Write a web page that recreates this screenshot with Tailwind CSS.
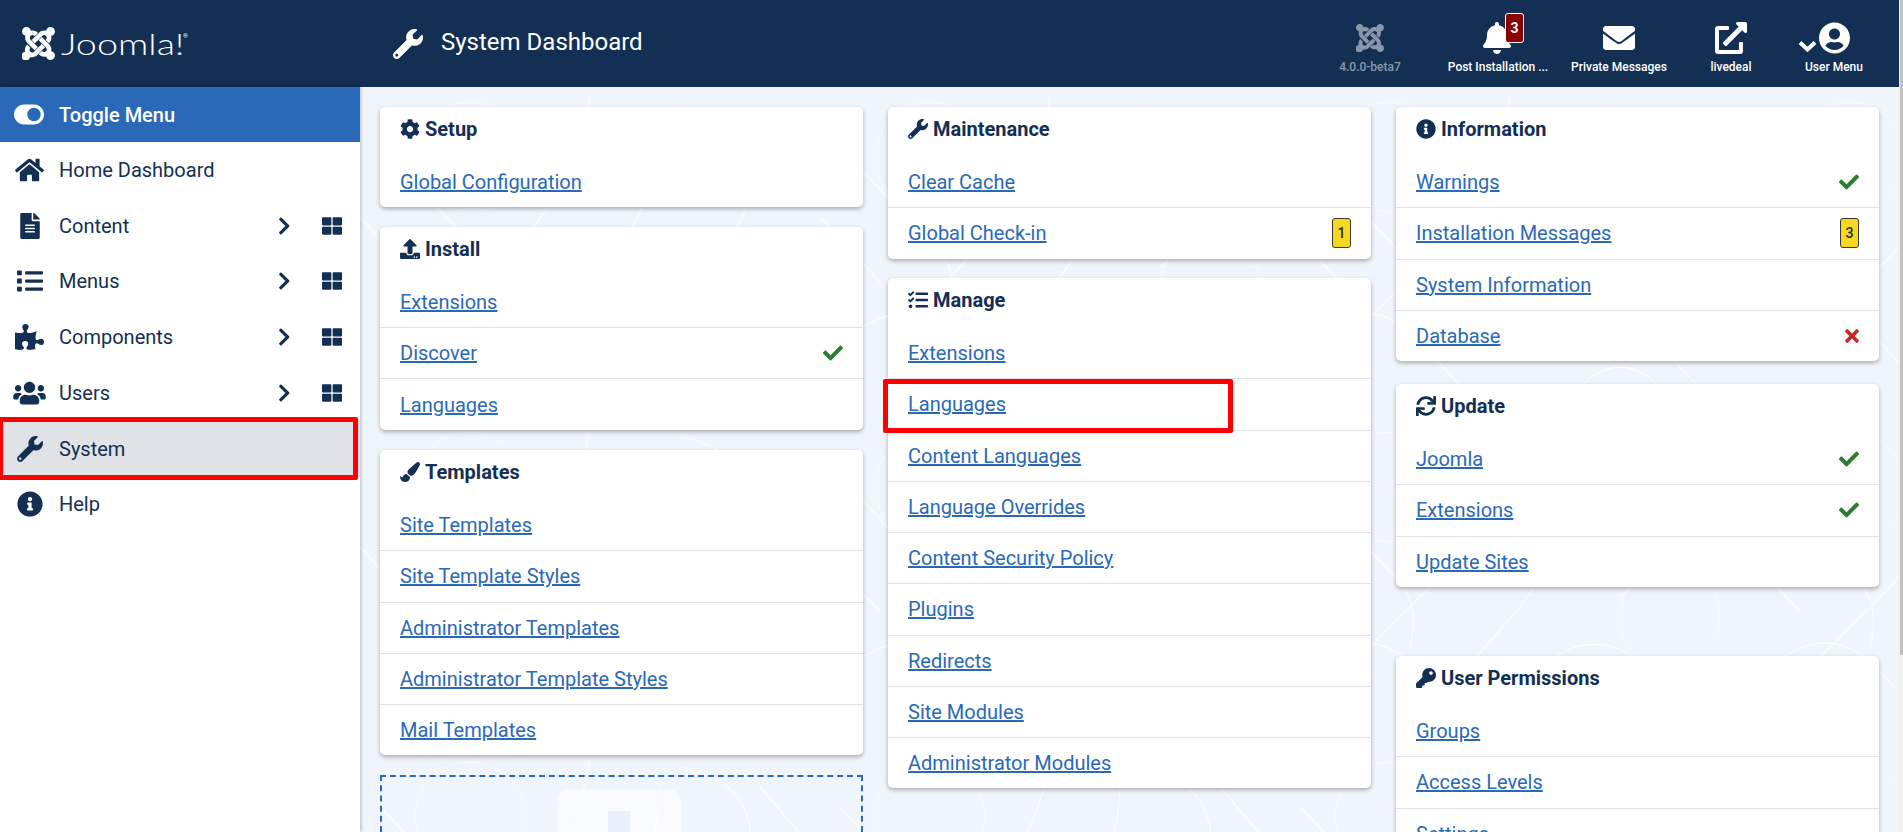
<!DOCTYPE html>
<html lang="en">
<head>
  <meta charset="UTF-8">
  <title>System Dashboard</title>
  <script src="https://cdn.jsdelivr.net/npm/@tailwindcss/browser@4"></script>
</head>
<body class="flex h-[832px] overflow-hidden bg-white font-['Roboto',sans-serif] text-[#132f53]">

  <!-- Icons -->
  <svg class="absolute h-0 w-0">
    <symbol id="i-joomla" viewBox="0 32 448 448"><path d="M.6 92.1C.6 58.8 27.4 32 60.4 32c30 0 54.5 21.9 59.2 50.2 32.6-7.6 67.1.6 96.5 30l-44.3 44.3c-20.5-20.5-42.6-16.3-55.4-3.5-14.3 14.3-14.3 37.9 0 52.2l99.5 99.5-44 44.3c-87.7-87.2-49.7-49.7-99.8-99.7-26.8-26.5-35-64.8-24.8-98.9C20.4 144.6.6 120.7.6 92.1zm129.5 116.4l44.3 44.3c10-10 89.7-89.7 99.7-99.8 14.3-14.3 37.6-14.3 51.9 0 12.8 12.8 17 35-3.5 55.4l44 44.3c31.2-31.2 38.5-67.6 28.9-101.2 29.2-4.1 51.9-29.2 51.9-59.5 0-33.2-26.8-60.1-59.8-60.1-30.3 0-55.4 22.5-59.5 51.6-33.8-9.9-71.7-1.5-98.3 25.1-18.3 19.1-71.1 71.5-99.6 99.9zm266.3 152.2c8.2-32.7-.9-68.5-26.3-93.9-11.8-12-69.8-70.1-99.8-99.9l-44.3 44.3 99.8 99.7c14.3 14.3 14.3 37.6 0 51.9-12.8 12.8-35 17-55.4-3.5l-44 44.3c27.6 30.2 68 38.8 102.7 28 5.5 27.4 29.7 48 58.9 48 33 0 59.8-26.8 59.8-60.1 0-30.2-22.5-55-51.4-58.8zm-84.3-53.1l-44-44.3c-87.2 87.2-49.7 49.7-99.8 99.7-20.5 20.5-42.6 16.3-55.4 3.5-14.3-14.3-14.3-37.6 0-51.9l-44.3-44.3c-26.2 26.2-34.7 63.7-25.4 97.2-29.5 4.3-52.1 29.5-52.1 60.1 0 33.2 26.8 60.1 59.8 60.1 29.4 0 53.9-21.2 59-49.2 33.8 9.9 71.9 1.3 98.5-25.3 16.2-16.2 71.7-71.9 104.7-105.6z"/></symbol>
    <symbol id="i-wrench" viewBox="0 0 512 512"><path d="M507.73 109.1c-2.24-9.03-13.54-12.09-20.12-5.51l-74.36 74.36-67.88-11.31-11.31-67.88 74.36-74.36c6.62-6.62 3.43-17.9-5.66-20.16-47.38-11.74-99.55.91-136.58 37.93-39.64 39.64-50.55 97.1-34.05 147.2L18.74 402.76c-24.99 24.99-24.99 65.51 0 90.5 24.99 24.99 65.51 24.99 90.5 0l213.21-213.21c50.12 16.71 107.47 5.68 147.37-34.22 37.07-37.07 49.7-89.32 37.91-136.73zM64 472c-13.25 0-24-10.75-24-24 0-13.26 10.75-24 24-24s24 10.74 24 24c0 13.25-10.75 24-24 24z"/></symbol>
    <symbol id="i-bell" viewBox="0 0 448 512"><path d="M224 512c35.32 0 63.97-28.65 63.97-64H160.03c0 35.35 28.65 64 63.97 64zm215.39-149.71c-19.32-20.76-55.47-51.99-55.47-154.29 0-77.7-54.48-139.9-127.94-155.16V32c0-17.67-14.32-32-31.98-32s-31.98 14.33-31.98 32v20.84C118.56 68.1 64.08 130.3 64.08 208c0 102.3-36.15 133.53-55.47 154.29-6 6.45-8.66 14.16-8.61 21.71.11 16.4 12.98 32 32.1 32h383.8c19.12 0 32-15.6 32.1-32 .05-7.55-2.61-15.27-8.61-21.71z"/></symbol>
    <symbol id="i-envelope" viewBox="0 0 512 512"><path d="M502.3 190.8c3.9-3.1 9.7-.2 9.7 4.7V400c0 26.5-21.5 48-48 48H48c-26.5 0-48-21.5-48-48V195.6c0-5 5.7-7.8 9.7-4.7 22.4 17.4 52.1 39.5 154.1 113.6 21.1 15.4 56.7 47.8 92.2 47.6 35.7.3 72-32.8 92.3-47.6 102-74.1 131.6-96.3 154-113.7zM256 320c23.2.4 56.6-29.2 73.4-41.4 132.7-96.3 142.8-104.7 173.4-128.7 5.8-4.5 9.2-11.5 9.2-18.9v-19c0-26.5-21.5-48-48-48H48C21.5 64 0 85.5 0 112v19c0 7.4 3.4 14.3 9.2 18.9 30.6 23.9 40.7 32.4 173.4 128.7 16.8 12.2 50.2 41.8 73.4 41.4z"/></symbol>
    <symbol id="i-external" viewBox="0 0 512 512"><path d="M432,320H400a16,16,0,0,0-16,16V448H64V128H208a16,16,0,0,0,16-16V80a16,16,0,0,0-16-16H48A48,48,0,0,0,0,112V464a48,48,0,0,0,48,48H400a48,48,0,0,0,48-48V336A16,16,0,0,0,432,320ZM488,0h-128c-21.37,0-32.05,25.91-17,41l35.73,35.73L135,320.37a24,24,0,0,0,0,34L157.67,377a24,24,0,0,0,34,0L435.28,133.32,471,169c15,15,41,4.5,41-17V24A24,24,0,0,0,488,0Z"/></symbol>
    <symbol id="i-user" viewBox="0 0 496 512"><path d="M248 8C111 8 0 119 0 256s111 248 248 248 248-111 248-248S385 8 248 8zm0 96c48.6 0 88 39.4 88 88s-39.4 88-88 88-88-39.4-88-88 39.4-88 88-88zm0 344c-58.7 0-111.3-26.6-146.5-68.2 18.8-35.4 55.6-59.8 98.5-59.8 2.4 0 4.8.4 7.1 1.1 13 4.2 26.6 6.9 40.9 6.9 14.3 0 28-2.7 40.9-6.9 2.3-.7 4.7-1.1 7.1-1.1 42.9 0 79.7 24.4 98.5 59.8C359.3 421.4 306.7 448 248 448z"/></symbol>
    <symbol id="i-toggle" viewBox="0 0 576 512"><path d="M384 64H192C86 64 0 150 0 256s86 192 192 192h192c106 0 192-86 192-192S490 64 384 64zm0 320c-70.8 0-128-57.3-128-128 0-70.8 57.3-128 128-128 70.8 0 128 57.3 128 128 0 70.8-57.3 128-128 128z"/></symbol>
    <symbol id="i-home" viewBox="0 0 576 512"><path d="M280.37 148.26L96 300.11V464a16 16 0 0 0 16 16l112.06-.29a16 16 0 0 0 15.92-16V368a16 16 0 0 1 16-16h64a16 16 0 0 1 16 16v95.64a16 16 0 0 0 16 16.05L464 480a16 16 0 0 0 16-16V300L295.67 148.26a12.19 12.19 0 0 0-15.3 0zM571.6 251.47L488 182.56V44.05a12 12 0 0 0-12-12h-56a12 12 0 0 0-12 12v72.61L318.47 43a48 48 0 0 0-61 0L4.34 251.47a12 12 0 0 0-1.6 16.9l25.5 31A12 12 0 0 0 45.15 301l235.22-193.74a12.19 12.19 0 0 1 15.3 0L530.9 301a12 12 0 0 0 16.9-1.6l25.5-31a12 12 0 0 0-1.7-16.93z"/></symbol>
    <symbol id="i-file" viewBox="0 0 384 512"><path d="M224 136V0H24C10.7 0 0 10.7 0 24v464c0 13.3 10.7 24 24 24h336c13.3 0 24-10.7 24-24V160H248c-13.2 0-24-10.8-24-24zm64 236c0 6.6-5.4 12-12 12H108c-6.6 0-12-5.4-12-12v-8c0-6.6 5.4-12 12-12h168c6.6 0 12 5.4 12 12v8zm0-64c0 6.6-5.4 12-12 12H108c-6.6 0-12-5.4-12-12v-8c0-6.6 5.4-12 12-12h168c6.6 0 12 5.4 12 12v8zm0-72v8c0 6.6-5.4 12-12 12H108c-6.6 0-12-5.4-12-12v-8c0-6.6 5.4-12 12-12h168c6.6 0 12 5.4 12 12zm96-114.1v6.1H256V0h6.1c6.4 0 12.5 2.5 17 7l97.9 98c4.5 4.5 7 10.6 7 16.9z"/></symbol>
    <symbol id="i-list" viewBox="0 0 512 512"><path d="M80 368H16a16 16 0 0 0-16 16v64a16 16 0 0 0 16 16h64a16 16 0 0 0 16-16v-64a16 16 0 0 0-16-16zm0-320H16A16 16 0 0 0 0 64v64a16 16 0 0 0 16 16h64a16 16 0 0 0 16-16V64a16 16 0 0 0-16-16zm0 160H16a16 16 0 0 0-16 16v64a16 16 0 0 0 16 16h64a16 16 0 0 0 16-16v-64a16 16 0 0 0-16-16zm416 176H176a16 16 0 0 0-16 16v32a16 16 0 0 0 16 16h320a16 16 0 0 0 16-16v-32a16 16 0 0 0-16-16zm0-320H176a16 16 0 0 0-16 16v32a16 16 0 0 0 16 16h320a16 16 0 0 0 16-16V80a16 16 0 0 0-16-16zm0 160H176a16 16 0 0 0-16 16v32a16 16 0 0 0 16 16h320a16 16 0 0 0 16-16v-32a16 16 0 0 0-16-16z"/></symbol>
    <symbol id="i-puzzle" viewBox="0 0 576 512"><path d="M519.442 288.651c-41.519 0-59.5 31.593-82.058 31.593C377.409 320.244 432 144 432 144s-196.288 80-196.288-3.297c0-35.827 36.288-46.25 36.288-85.985C272 19.216 243.885 0 210.539 0c-34.654 0-66.366 18.891-66.366 56.346 0 41.364 31.711 59.277 31.711 81.75C175.885 207.719 0 166.758 0 166.758v333.237s178.635 41.047 178.635-28.662c0-22.473-40-40.107-40-81.471 0-37.456 29.25-56.346 63.577-56.346 33.673 0 61.788 19.216 61.788 54.717 0 39.735-36.288 50.158-36.288 85.985 0 60.803 129.675 25.73 181.23 25.73 0 0-34.725-120.101 25.827-120.101 35.962 0 46.423 36.152 86.308 36.152C556.712 416 576 387.99 576 354.443c0-34.199-18.962-65.792-56.558-65.792z"/></symbol>
    <symbol id="i-users" viewBox="0 0 640 512"><path d="M96 224c35.3 0 64-28.7 64-64s-28.7-64-64-64-64 28.7-64 64 28.7 64 64 64zm448 0c35.3 0 64-28.7 64-64s-28.7-64-64-64-64 28.7-64 64 28.7 64 64 64zm32 32h-64c-17.6 0-33.5 7.1-45.1 18.6 40.3 22.1 68.9 62 75.1 109.4h66c17.7 0 32-14.3 32-32v-32c0-35.3-28.7-64-64-64zm-256 0c61.9 0 112-50.1 112-112S381.9 32 320 32 208 82.1 208 144s50.1 112 112 112zm76.8 32h-8.3c-20.8 10-43.9 16-68.5 16s-47.6-6-68.5-16h-8.3C179.6 288 128 339.6 128 403.2V432c0 26.5 21.5 48 48 48h288c26.5 0 48-21.5 48-48v-28.8c0-63.6-51.6-115.2-115.2-115.2zm-223.7-13.4C161.5 263.1 145.6 256 128 256H64c-35.3 0-64 28.7-64 64v32c0 17.7 14.3 32 32 32h65.9c6.3-47.4 34.9-87.3 75.2-109.4z"/></symbol>
    <symbol id="i-info" viewBox="0 0 512 512"><path d="M256 8C119.043 8 8 119.083 8 256c0 136.997 111.043 248 248 248s248-111.003 248-248C504 119.083 392.957 8 256 8zm0 110c23.196 0 42 18.804 42 42s-18.804 42-42 42-42-18.804-42-42 18.804-42 42-42zm56 254c0 6.627-5.373 12-12 12h-88c-6.627 0-12-5.373-12-12v-24c0-6.627 5.373-12 12-12h12v-64h-12c-6.627 0-12-5.373-12-12v-24c0-6.627 5.373-12 12-12h64c6.627 0 12 5.373 12 12v100h12c6.627 0 12 5.373 12 12v24z"/></symbol>
    <symbol id="i-th" viewBox="0 0 512 512"><path d="M296 32h192c13.255 0 24 10.745 24 24v160c0 13.255-10.745 24-24 24H296c-13.255 0-24-10.745-24-24V56c0-13.255 10.745-24 24-24zm-80 0H24C10.745 32 0 42.745 0 56v160c0 13.255 10.745 24 24 24h192c13.255 0 24-10.745 24-24V56c0-13.255-10.745-24-24-24zM0 296v160c0 13.255 10.745 24 24 24h192c13.255 0 24-10.745 24-24V296c0-13.255-10.745-24-24-24H24c-13.255 0-24 10.745-24 24zm296 184h192c13.255 0 24-10.745 24-24V296c0-13.255-10.745-24-24-24H296c-13.255 0-24 10.745-24 24v160c0 13.255 10.745 24 24 24z"/></symbol>
    <symbol id="i-chevron" viewBox="0 0 320 512"><path d="M285.476 272.971L91.132 467.314c-9.373 9.373-24.569 9.373-33.941 0l-22.667-22.667c-9.357-9.357-9.375-24.522-.04-33.901L188.505 256 34.484 101.255c-9.335-9.379-9.317-24.544.04-33.901l22.667-22.667c9.373-9.373 24.569-9.373 33.941 0L285.475 239.03c9.373 9.372 9.373 24.568.001 33.941z"/></symbol>
    <symbol id="i-cog" viewBox="0 0 512 512"><path d="M487.4 315.7l-42.6-24.6c4.3-23.2 4.3-47 0-70.2l42.6-24.6c4.9-2.8 7.1-8.6 5.5-14-11.1-35.6-30-67.8-54.7-94.6-3.8-4.1-10-5.1-14.8-2.3L380.8 110c-17.9-15.4-38.5-27.3-60.8-35.1V25.8c0-5.6-3.9-10.5-9.4-11.7-36.7-8.2-74.3-7.8-109.2 0-5.5 1.2-9.4 6.1-9.4 11.7V75c-22.2 7.9-42.8 19.8-60.8 35.1L88.7 85.5c-4.9-2.8-11-1.9-14.8 2.3-24.7 26.7-43.6 58.9-54.7 94.6-1.7 5.4.6 11.2 5.5 14L67.3 221c-4.3 23.2-4.3 47 0 70.2l-42.6 24.6c-4.9 2.8-7.1 8.6-5.5 14 11.1 35.6 30 67.8 54.7 94.6 3.8 4.1 10 5.1 14.8 2.3l42.6-24.6c17.9 15.4 38.5 27.3 60.8 35.1v49.2c0 5.6 3.9 10.5 9.4 11.7 36.7 8.2 74.3 7.8 109.2 0 5.5-1.2 9.4-6.1 9.4-11.7v-49.2c22.2-7.9 42.8-19.8 60.8-35.1l42.6 24.6c4.9 2.8 11 1.9 14.8-2.3 24.7-26.7 43.6-58.9 54.7-94.6 1.5-5.5-.7-11.3-5.6-14.1zM256 336c-44.1 0-80-35.9-80-80s35.9-80 80-80 80 35.9 80 80-35.9 80-80 80z"/></symbol>
    <symbol id="i-upload" viewBox="0 0 512 512"><path d="M296 384h-80c-13.3 0-24-10.7-24-24V192h-87.7c-17.8 0-26.7-21.5-14.1-34.1L242.3 5.7c7.5-7.5 19.8-7.5 27.3 0l152.2 152.2c12.6 12.6 3.7 34.1-14.1 34.1H320v168c0 13.3-10.7 24-24 24zm216-8v112c0 13.3-10.7 24-24 24H24c-13.3 0-24-10.7-24-24V376c0-13.3 10.7-24 24-24h136v8c0 30.9 25.1 56 56 56h80c30.9 0 56-25.1 56-56v-8h136c13.3 0 24 10.7 24 24zm-124 88c0-11-9-20-20-20s-20 9-20 20 9 20 20 20 20-9 20-20zm64 0c0-11-9-20-20-20s-20 9-20 20 9 20 20 20 20-9 20-20z"/></symbol>
    <symbol id="i-brush" viewBox="0 0 512 512"><path d="M167.02 309.34c-40.12 2.58-76.53 17.86-97.19 72.3-2.35 6.21-8 9.98-14.59 9.98-11.11 0-45.46-27.67-55.25-34.35C0 439.62 37.93 512 128 512c75.86 0 128-43.77 128-120.19 0-3.11-.65-6.08-.97-9.13l-88.01-73.34zM457.89 0c-15.16 0-29.37 6.71-40.21 16.45C213.27 199.05 192 203.34 192 257.09c0 13.7 3.25 26.76 8.73 38.7l63.82 53.18c7.21 1.8 14.64 3.03 22.39 3.03 62.11 0 98.11-45.47 211.16-256.46 7.38-14.35 13.9-29.85 13.9-45.99C512 20.64 486 0 457.89 0z"/></symbol>
    <symbol id="i-tasks" viewBox="0 0 512 512"><path d="M139.61 35.5a12 12 0 0 0-17 0L58.93 98.81l-22.7-22.12a12 12 0 0 0-17 0L3.53 92.41a12 12 0 0 0 0 17l47.59 47.4a12.78 12.78 0 0 0 17.61 0l15.59-15.62L156.52 69a12.09 12.09 0 0 0 .09-17zm0 159.19a12 12 0 0 0-17 0l-63.68 63.72-22.7-22.1a12 12 0 0 0-17 0L3.53 252a12 12 0 0 0 0 17L51 316.5a12.77 12.77 0 0 0 17.6 0l15.7-15.69 72.2-72.22a12 12 0 0 0 .09-16.9zM64 368c-26.49 0-48.59 21.5-48.59 48S37.53 464 64 464a48 48 0 0 0 0-96zm432 16H208a16 16 0 0 0-16 16v32a16 16 0 0 0 16 16h288a16 16 0 0 0 16-16v-32a16 16 0 0 0-16-16zm0-320H208a16 16 0 0 0-16 16v32a16 16 0 0 0 16 16h288a16 16 0 0 0 16-16V80a16 16 0 0 0-16-16zm0 160H208a16 16 0 0 0-16 16v32a16 16 0 0 0 16 16h288a16 16 0 0 0 16-16v-32a16 16 0 0 0-16-16z"/></symbol>
    <symbol id="i-sync" viewBox="0 0 512 512"><path d="M440.65 12.57l4 82.77A247.16 247.16 0 0 0 255.83 8C134.73 8 33.91 94.92 12.29 209.82A12 12 0 0 0 24.09 224h49.05a12 12 0 0 0 11.67-9.26 175.91 175.91 0 0 1 317-56.94l-101.46-4.86a12 12 0 0 0-12.57 12v47.41a12 12 0 0 0 12 12H500a12 12 0 0 0 12-12V12a12 12 0 0 0-12-12h-47.37a12 12 0 0 0-11.98 12.57zM255.83 432a175.61 175.61 0 0 1-146-77.8l101.8 4.87a12 12 0 0 0 12.57-12v-47.4a12 12 0 0 0-12-12H12a12 12 0 0 0-12 12V500a12 12 0 0 0 12 12h47.35a12 12 0 0 0 12-12.6l-4.15-82.57A247.17 247.17 0 0 0 255.83 504c121.11 0 221.93-86.92 243.55-201.82a12 12 0 0 0-11.8-14.18h-49.05a12 12 0 0 0-11.67 9.26A175.86 175.86 0 0 1 255.83 432z"/></symbol>
    <symbol id="i-key" viewBox="0 0 512 512"><path d="M512 176.001C512 273.203 433.202 352 336 352c-11.22 0-22.19-1.062-32.827-3.069l-24.012 27.014A23.999 23.999 0 0 1 261.223 384H224v40c0 13.255-10.745 24-24 24h-40v40c0 13.255-10.745 24-24 24H24c-13.255 0-24-10.745-24-24v-78.059c0-6.365 2.529-12.47 7.029-16.971l161.802-161.802C163.108 213.814 160 195.271 160 176 160 78.798 238.797.001 335.999 0 433.488-.001 512 78.511 512 176.001zM336 128c0 26.51 21.49 48 48 48s48-21.49 48-48-21.49-48-48-48-48 21.49-48 48z"/></symbol>
    <symbol id="i-check" viewBox="0 0 512 512"><path d="M173.898 439.404l-166.4-166.4c-9.997-9.997-9.997-26.206 0-36.204l36.203-36.204c9.997-9.998 26.207-9.998 36.204 0L192 312.69 432.095 72.596c9.997-9.997 26.207-9.997 36.204 0l36.203 36.204c9.997 9.997 9.997 26.206 0 36.204l-294.4 294.401c-9.998 9.997-26.207 9.997-36.204-.001z"/></symbol>
    <symbol id="i-times" viewBox="0 0 352 512"><path d="M242.72 256l100.07-100.07c12.28-12.28 12.28-32.19 0-44.48l-22.24-22.24c-12.28-12.28-32.19-12.28-44.48 0L176 189.28 75.93 89.21c-12.28-12.28-32.19-12.28-44.48 0L9.21 111.45c-12.28 12.28-12.28 32.19 0 44.48L109.28 256 9.21 356.07c-12.28 12.28-12.28 32.19 0 44.48l22.24 22.24c12.28 12.28 32.2 12.28 44.48 0L176 322.72l100.07 100.07c12.28 12.28 32.2 12.28 44.48 0l22.24-22.24c12.28-12.28 12.28-32.19 0-44.48L242.72 256z"/></symbol>
    <pattern id="bg-lines" width="460" height="330" patternUnits="userSpaceOnUse">
      <path d="M20 60 L120 165 Q140 190 130 230 M230 10 Q220 90 150 170 L70 250 M300 40 Q300 110 240 190 L170 270 M320 20 Q380 30 390 80 Q400 130 340 180 M30 250 Q90 200 140 255 L200 320 M260 250 Q320 200 380 260 L450 330 M400 40 L460 110 M0 130 L60 195 M300 300 Q340 260 380 300" fill="none" stroke="#ffffff" stroke-width="1.2" stroke-opacity="0.75"/>
      <circle cx="110" cy="70" r="55" fill="none" stroke="#ffffff" stroke-width="1" stroke-opacity="0.55"/>
      <circle cx="390" cy="200" r="50" fill="none" stroke="#ffffff" stroke-width="1" stroke-opacity="0.55"/>
    </pattern>
  </svg>

  <div class="flex min-w-0 flex-1 flex-col">
    <!-- Header -->
    <header class="flex h-[87px] shrink-0 bg-[#132f53] text-white">
      <div class="flex w-[360px] items-center pl-[22px]">
        <svg class="h-[33px] w-[33px] fill-current"><use href="#i-joomla"/></svg>
        <span class="ml-[6px] inline-block origin-left scale-x-[1.3] font-['Lato',sans-serif] text-[29px] font-light leading-none">Joomla!</span>
        <span class="mb-[16px] ml-[27px] text-[6px] leading-none">®</span>
      </div>
      <div class="flex items-center pl-[33px]">
        <svg class="h-[30px] w-[30px] fill-current"><use href="#i-wrench"/></svg>
        <h1 class="mb-[3px] ml-[18px] text-[24px] leading-none">System Dashboard</h1>
      </div>
      <div class="ml-auto flex pr-[16px] pt-[22px] text-[12px] font-medium leading-none">
        <div class="flex w-[130px] flex-col items-center text-white/50">
          <svg class="mb-[9px] mt-[2px] h-[28px] w-[28px] fill-current"><use href="#i-joomla"/></svg>
          <span>4.0.0-beta7</span>
        </div>
        <div class="relative flex w-[126px] flex-col items-center">
          <svg class="mb-[7px] mr-[2px] h-[32px] w-[28px] fill-current"><use href="#i-bell"/></svg>
          <span>Post Installation ...</span>
          <span class="absolute left-[70px] -top-[9px] flex h-[30px] w-[19px] items-center justify-center rounded-[3px] border border-white bg-[#8c0000] text-[14px] font-bold">3</span>
        </div>
        <div class="flex w-[116px] flex-col items-center">
          <svg class="mb-[7px] h-[32px] w-[32px] fill-current"><use href="#i-envelope"/></svg>
          <span>Private Messages</span>
        </div>
        <div class="flex w-[108px] flex-col items-center">
          <svg class="mb-[7px] h-[32px] w-[32px] fill-current"><use href="#i-external"/></svg>
          <span>livedeal</span>
        </div>
        <div class="flex w-[98px] flex-col items-center">
          <div class="mr-[20px] flex">
            <svg class="mr-[2px] mt-[18px] h-[13px] w-[19px]" viewBox="0 0 19 13" fill="none" stroke="currentColor" stroke-width="4"><path d="M2 2.5L9.5 9.5L17 2.5"/></svg>
            <svg class="mb-[7px] h-[32px] w-[31px] fill-current"><use href="#i-user"/></svg>
          </div>
          <span>User Menu</span>
        </div>
      </div>
    </header>

    <div class="flex min-h-0 flex-1">
      <!-- Sidebar -->
      <aside class="relative z-10 w-[360px] shrink-0 bg-white text-[20px] shadow-[1px_0_3px_rgba(0,0,0,0.25)]">
        <div class="flex h-[55px] items-center bg-[#2a69b8] font-medium text-white">
          <svg class="ml-[14px] h-[27px] w-[30px] fill-current"><use href="#i-toggle"/></svg>
          <span class="ml-[15px]">Toggle Menu</span>
        </div>
        <div class="flex h-[55.75px] items-center">
          <span class="flex w-[59px] justify-center"><svg class="h-[26px] w-[29px] fill-current"><use href="#i-home"/></svg></span>
          <span>Home Dashboard</span>
        </div>
        <div class="flex h-[55.75px] items-center">
          <span class="flex w-[59px] justify-center"><svg class="h-[26px] w-[20px] fill-current"><use href="#i-file"/></svg></span>
          <span>Content</span>
          <svg class="ml-auto h-[20px] w-[12.5px] fill-current"><use href="#i-chevron"/></svg>
          <svg class="ml-[32px] mr-[18px] h-[20px] w-[20px] fill-current"><use href="#i-th"/></svg>
        </div>
        <div class="flex h-[55.75px] items-center">
          <span class="flex w-[59px] justify-center"><svg class="h-[26px] w-[26px] fill-current"><use href="#i-list"/></svg></span>
          <span>Menus</span>
          <svg class="ml-auto h-[20px] w-[12.5px] fill-current"><use href="#i-chevron"/></svg>
          <svg class="ml-[32px] mr-[18px] h-[20px] w-[20px] fill-current"><use href="#i-th"/></svg>
        </div>
        <div class="flex h-[55.75px] items-center">
          <span class="flex w-[59px] justify-center"><svg class="h-[26px] w-[29px] fill-current"><use href="#i-puzzle"/></svg></span>
          <span>Components</span>
          <svg class="ml-auto h-[20px] w-[12.5px] fill-current"><use href="#i-chevron"/></svg>
          <svg class="ml-[32px] mr-[18px] h-[20px] w-[20px] fill-current"><use href="#i-th"/></svg>
        </div>
        <div class="flex h-[55.75px] items-center">
          <span class="flex w-[59px] justify-center"><svg class="h-[26px] w-[33px] fill-current"><use href="#i-users"/></svg></span>
          <span>Users</span>
          <svg class="ml-auto h-[20px] w-[12.5px] fill-current"><use href="#i-chevron"/></svg>
          <svg class="ml-[32px] mr-[18px] h-[20px] w-[20px] fill-current"><use href="#i-th"/></svg>
        </div>
        <div class="relative flex h-[55.75px] items-center bg-[#dfe3e7]">
          <span class="flex w-[59px] justify-center"><svg class="h-[26px] w-[26px] fill-current"><use href="#i-wrench"/></svg></span>
          <span>System</span>
          <div class="absolute -bottom-[3px] -left-[2px] -top-[4px] w-[360px] rounded-[2px] border-[5px] border-[#ff0000]"></div>
        </div>
        <div class="flex h-[55.75px] items-center">
          <span class="flex w-[59px] justify-center"><svg class="h-[26px] w-[26px] fill-current"><use href="#i-info"/></svg></span>
          <span>Help</span>
        </div>
      </aside>

      <!-- Main -->
      <main class="relative flex min-w-0 flex-1 gap-[25px] overflow-hidden bg-[#f0f4fb] pl-[20px] pt-[20px] text-[20px] text-[#2a69b8]">
        <svg class="absolute inset-0 h-full w-full"><rect width="100%" height="100%" fill="url(#bg-lines)"/></svg>

        <div class="relative flex w-[483px] shrink-0 flex-col gap-[19.5px]">
          <section class="rounded-[5px] bg-white shadow-[0_2px_4px_rgba(0,0,0,0.3)]">
            <h2 class="flex h-[49px] items-start gap-[5px] px-[20px] pt-[10px] font-bold leading-[24px] text-[#132f53]"><svg class="mt-[2px] h-[20px] w-[20px] fill-current"><use href="#i-cog"/></svg>Setup</h2>
            <div class="flex h-[51.25px] items-center border-t border-transparent px-[20px]"><a class="underline decoration-[1.5px]">Global Configuration</a></div>
          </section>
          <section class="rounded-[5px] bg-white shadow-[0_2px_4px_rgba(0,0,0,0.3)]">
            <h2 class="flex h-[49px] items-start gap-[5px] px-[20px] pt-[10px] font-bold leading-[24px] text-[#132f53]"><svg class="mt-[2px] h-[20px] w-[20px] fill-current"><use href="#i-upload"/></svg>Install</h2>
            <div class="flex h-[51.25px] items-center border-t border-transparent px-[20px]"><a class="underline decoration-[1.5px]">Extensions</a></div>
            <div class="flex h-[51.25px] items-center justify-between border-t border-[#dfe3e7] px-[20px]"><a class="underline decoration-[1.5px]">Discover</a><svg class="h-[20px] w-[20px] fill-[#2f7d32]"><use href="#i-check"/></svg></div>
            <div class="flex h-[51.75px] items-center border-t border-[#dfe3e7] px-[20px]"><a class="underline decoration-[1.5px]">Languages</a></div>
          </section>
          <section class="rounded-[5px] bg-white shadow-[0_2px_4px_rgba(0,0,0,0.3)]">
            <h2 class="flex h-[49.5px] items-start gap-[5px] px-[20px] pt-[10px] font-bold leading-[24px] text-[#132f53]"><svg class="mt-[2px] h-[20px] w-[20px] fill-current"><use href="#i-brush"/></svg>Templates</h2>
            <div class="flex h-[51.25px] items-center border-t border-transparent px-[20px]"><a class="underline decoration-[1.5px]">Site Templates</a></div>
            <div class="flex h-[51.25px] items-center border-t border-[#dfe3e7] px-[20px]"><a class="underline decoration-[1.5px]">Site Template Styles</a></div>
            <div class="flex h-[51.25px] items-center border-t border-[#dfe3e7] px-[20px]"><a class="underline decoration-[1.5px]">Administrator Templates</a></div>
            <div class="flex h-[51.25px] items-center border-t border-[#dfe3e7] px-[20px]"><a class="underline decoration-[1.5px]">Administrator Template Styles</a></div>
            <div class="flex h-[51.25px] items-center border-t border-[#dfe3e7] px-[20px]"><a class="underline decoration-[1.5px]">Mail Templates</a></div>
          </section>
          <div class="flex h-[200px] shrink-0 justify-center border-2 border-dashed border-[#2a69b8] pr-[5px] pt-[12px]">
            <div class="relative h-[124px] w-[124px] rounded-[12px] bg-white/50">
              <div class="absolute left-[51px] top-[22px] h-[80px] w-[22px] bg-[#eaf0fb]"></div>
            </div>
          </div>
        </div>

        <div class="relative flex w-[483px] shrink-0 flex-col gap-[19.5px]">
          <section class="rounded-[5px] bg-white shadow-[0_2px_4px_rgba(0,0,0,0.3)]">
            <h2 class="flex h-[49px] items-start gap-[5px] px-[20px] pt-[10px] font-bold leading-[24px] text-[#132f53]"><svg class="mt-[2px] h-[20px] w-[20px] fill-current"><use href="#i-wrench"/></svg>Maintenance</h2>
            <div class="flex h-[51.25px] items-center border-t border-transparent px-[20px]"><a class="underline decoration-[1.5px]">Clear Cache</a></div>
            <div class="flex h-[51.25px] items-center justify-between border-t border-[#dfe3e7] px-[20px]"><a class="underline decoration-[1.5px]">Global Check-in</a><span class="flex h-[30px] w-[19px] items-center justify-center rounded-[3px] border border-[#3a3a2a] bg-[#f7d71f] text-[14px] font-medium text-[#132f53]">1</span></div>
          </section>
          <section class="rounded-[5px] bg-white shadow-[0_2px_4px_rgba(0,0,0,0.3)]">
            <h2 class="flex h-[49px] items-start gap-[5px] px-[20px] pt-[10px] font-bold leading-[24px] text-[#132f53]"><svg class="mt-[2px] h-[20px] w-[20px] fill-current"><use href="#i-tasks"/></svg>Manage</h2>
            <div class="flex h-[51.25px] items-center border-t border-transparent px-[20px]"><a class="underline decoration-[1.5px]">Extensions</a></div>
            <div class="relative flex h-[51.25px] items-center border-t border-[#dfe3e7] px-[20px]"><a class="underline decoration-[1.5px]">Languages</a>
              <div class="absolute -bottom-[3px] -left-[5px] top-0 w-[350px] rounded-[2px] border-[5px] border-[#ff0000]"></div>
            </div>
            <div class="flex h-[51.25px] items-center border-t border-[#dfe3e7] px-[20px]"><a class="underline decoration-[1.5px]">Content Languages</a></div>
            <div class="flex h-[51.25px] items-center border-t border-[#dfe3e7] px-[20px]"><a class="underline decoration-[1.5px]">Language Overrides</a></div>
            <div class="flex h-[51.25px] items-center border-t border-[#dfe3e7] px-[20px]"><a class="underline decoration-[1.5px]">Content Security Policy</a></div>
            <div class="flex h-[51.25px] items-center border-t border-[#dfe3e7] px-[20px]"><a class="underline decoration-[1.5px]">Plugins</a></div>
            <div class="flex h-[51.25px] items-center border-t border-[#dfe3e7] px-[20px]"><a class="underline decoration-[1.5px]">Redirects</a></div>
            <div class="flex h-[51.25px] items-center border-t border-[#dfe3e7] px-[20px]"><a class="underline decoration-[1.5px]">Site Modules</a></div>
            <div class="flex h-[51.25px] items-center border-t border-[#dfe3e7] px-[20px]"><a class="underline decoration-[1.5px]">Administrator Modules</a></div>
          </section>
        </div>

        <div class="relative flex w-[483px] shrink-0 flex-col">
          <section class="shrink-0 rounded-[5px] bg-white shadow-[0_2px_4px_rgba(0,0,0,0.3)]">
            <h2 class="flex h-[49px] items-start gap-[5px] px-[20px] pt-[10px] font-bold leading-[24px] text-[#132f53]"><svg class="mt-[2px] h-[20px] w-[20px] fill-current"><use href="#i-info"/></svg>Information</h2>
            <div class="flex h-[51.25px] items-center justify-between border-t border-transparent px-[20px]"><a class="underline decoration-[1.5px]">Warnings</a><svg class="h-[20px] w-[20px] fill-[#2f7d32]"><use href="#i-check"/></svg></div>
            <div class="flex h-[51.25px] items-center justify-between border-t border-[#dfe3e7] px-[20px]"><a class="underline decoration-[1.5px]">Installation Messages</a><span class="flex h-[30px] w-[19px] items-center justify-center rounded-[3px] border border-[#3a3a2a] bg-[#f7d71f] text-[14px] font-medium text-[#132f53]">3</span></div>
            <div class="flex h-[51.25px] items-center border-t border-[#dfe3e7] px-[20px]"><a class="underline decoration-[1.5px]">System Information</a></div>
            <div class="flex h-[51.25px] items-center justify-between border-t border-[#dfe3e7] px-[20px]"><a class="underline decoration-[1.5px]">Database</a><svg class="h-[20px] w-[14px] fill-[#c52827]"><use href="#i-times"/></svg></div>
          </section>
          <section class="mt-[23px] shrink-0 rounded-[5px] bg-white shadow-[0_2px_4px_rgba(0,0,0,0.3)]">
            <h2 class="flex h-[49px] items-start gap-[5px] px-[20px] pt-[10px] font-bold leading-[24px] text-[#132f53]"><svg class="mt-[2px] h-[20px] w-[20px] fill-current"><use href="#i-sync"/></svg>Update</h2>
            <div class="flex h-[51.25px] items-center justify-between border-t border-transparent px-[20px]"><a class="underline decoration-[1.5px]">Joomla</a><svg class="h-[20px] w-[20px] fill-[#2f7d32]"><use href="#i-check"/></svg></div>
            <div class="flex h-[51.25px] items-center justify-between border-t border-[#dfe3e7] px-[20px]"><a class="underline decoration-[1.5px]">Extensions</a><svg class="h-[20px] w-[20px] fill-[#2f7d32]"><use href="#i-check"/></svg></div>
            <div class="flex h-[51.25px] items-center border-t border-[#dfe3e7] px-[20px]"><a class="underline decoration-[1.5px]">Update Sites</a></div>
          </section>
          <section class="mt-[69.25px] shrink-0 rounded-[5px] bg-white shadow-[0_2px_4px_rgba(0,0,0,0.3)]">
            <h2 class="flex h-[49px] items-start gap-[5px] px-[20px] pt-[10px] font-bold leading-[24px] text-[#132f53]"><svg class="mt-[2px] h-[20px] w-[20px] fill-current"><use href="#i-key"/></svg>User Permissions</h2>
            <div class="flex h-[51.25px] items-center border-t border-transparent px-[20px]"><a class="underline decoration-[1.5px]">Groups</a></div>
            <div class="flex h-[51.25px] items-center border-t border-[#dfe3e7] px-[20px]"><a class="underline decoration-[1.5px]">Access Levels</a></div>
            <div class="flex h-[51.25px] items-center border-t border-[#dfe3e7] px-[20px]"><a class="underline decoration-[1.5px]">Settings</a></div>
          </section>
        </div>
      </main>
    </div>
  </div>

  <!-- Scrollbar -->
  <div class="w-[4px] shrink-0 bg-[#f1f1f1] pl-[1px]">
    <div class="h-[655px] bg-[#c1c1c1]"></div>
  </div>
</body>
</html>
